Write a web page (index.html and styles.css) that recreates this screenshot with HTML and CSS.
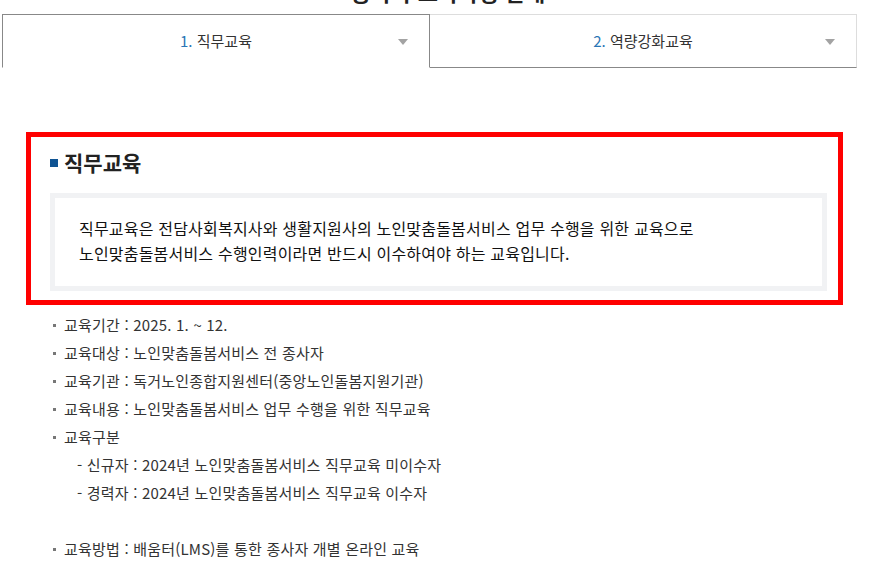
FILE: index.html
```html
<!DOCTYPE html>
<html lang="ko">
<head>
    <meta charset="UTF-8">
    <meta name="viewport" content="width=device-width, initial-scale=1.0">
    <title>직무교육 안내</title>
    <link rel="stylesheet" href="styles.css">
</head>
<body>

<div class="page">
    <h2 class="page-title">종사자 교육과정 안내</h2>

    <!-- tab menu -->
    <div class="tabs">
        <a class="tab active" href="#"><span class="num">1.</span> 직무교육<i class="arrow"></i></a>
        <a class="tab" href="#"><span class="num">2.</span> 역량강화교육<i class="arrow"></i></a>
    </div>

    <!-- highlighted intro -->
    <div class="highlight">
        <h3 class="sec-title"><span class="sq"></span>직무교육</h3>
        <div class="desc-box">
            <p>직무교육은 전담사회복지사와 생활지원사의 노인맞춤돌봄서비스 업무 수행을 위한 교육으로<br>
            노인맞춤돌봄서비스 수행인력이라면 반드시 이수하여야 하는 교육입니다.</p>
        </div>
    </div>

    <ul class="info-list">
        <li>교육기간 : 2025. 1. ~ 12.</li>
        <li>교육대상 : 노인맞춤돌봄서비스 전 종사자</li>
        <li>교육기관 : 독거노인종합지원센터(중앙노인돌봄지원기관)</li>
        <li>교육내용 : 노인맞춤돌봄서비스 업무 수행을 위한 직무교육</li>
        <li>교육구분
            <div class="sub">- 신규자 : 2024년 노인맞춤돌봄서비스 직무교육 미이수자</div>
            <div class="sub">- 경력자 : 2024년 노인맞춤돌봄서비스 직무교육 이수자</div>
        </li>
        <li class="gap">교육방법 : 배움터(LMS)를 통한 종사자 개별 온라인 교육</li>
    </ul>
</div>

</body>
</html>
```

FILE: styles.css
```css
body {
    margin: 0;
    font-family: "Noto Sans CJK KR", "Noto Sans", sans-serif;
    color: #333;
    background: #fff;
    overflow: hidden;
}
.page {
    width: 896px;
}
.page-title {
    margin: -23px 0 0;
    height: 28px;
    line-height: 28px;
    font-size: 22px;
    font-weight: 700;
    text-align: center;
    color: #222;
}
.tabs {
    display: flex;
    margin: 9px 0 0 2px;
    width: 855px;
}
.tab {
    position: relative;
    flex: 1;
    height: 52px;
    line-height: 51px;
    text-align: center;
    font-size: 15px;
    color: #333;
    text-decoration: none;
    border-top: 1px solid #ddd;
    border-right: 1px solid #ddd;
    border-bottom: 1px solid #888;
}
.tab.active {
    border: 1px solid #888;
    border-bottom: 1px solid transparent;
}
.tab .num {
    color: #2a75b5;
}
.tab .arrow {
    position: absolute;
    right: 21px;
    top: 24px;
    width: 0;
    height: 0;
    border-left: 5px solid transparent;
    border-right: 5px solid transparent;
    border-top: 6px solid #a3a3a3;
}
.highlight {
    box-sizing: border-box;
    margin: 64px 0 0 26px;
    width: 817px;
    border: 5px solid #ff0000;
    padding: 10px 11px 9px 19px;
}
.sec-title {
    display: flex;
    align-items: center;
    margin: 0 0 16px;
    height: 30px;
    font-size: 21px;
    font-weight: 700;
    color: #222;
}
.sec-title .sq {
    width: 8px;
    height: 8px;
    background: #0f5493;
    margin: 2px 6px 0 0;
}
.desc-box {
    border: 5px solid #f1f2f4;
    padding: 18px 24px 20px;
}
.desc-box p {
    margin: 0;
    font-size: 16px;
    line-height: 25px;
    letter-spacing: 0.2px;
    font-weight: 400;
    color: #111;
}
.info-list {
    list-style: none;
    margin: 6px 0 0;
    padding: 0 0 0 64px;
    font-size: 15px;
    line-height: 28px;
    letter-spacing: 0.2px;
    color: #333;
}
.info-list li {
    position: relative;
}
.info-list li::before {
    content: "";
    position: absolute;
    left: -11px;
    top: 13px;
    width: 3px;
    height: 3px;
    background: #777;
}
.info-list .sub {
    padding-left: 13px;
}
.info-list li.gap {
    margin-top: 28px;
}
```
